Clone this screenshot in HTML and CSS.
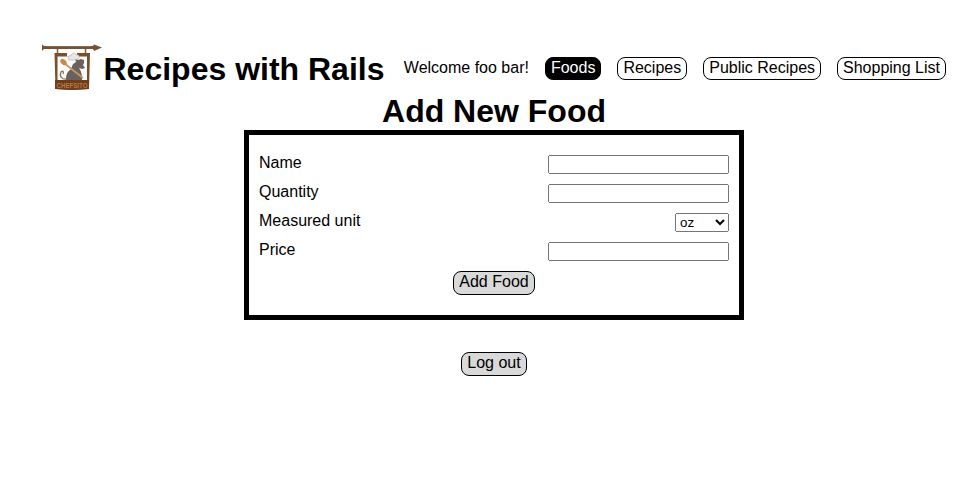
FILE: index.html
```html
<!DOCTYPE html>
<html lang="en">
<head>
<meta charset="utf-8">
<title>Recipes with Rails</title>
<link rel="stylesheet" href="styles.css">
</head>
<body>
<div class="page">
  <header class="header">
    <svg class="logo" viewBox="0 0 60 50" role="img" aria-label="Chefsito">
      <path d="M0 1.500l2 1.500h49l1-1.500L60 4.500l-8 3.500-1-2H2L0 8z" fill="#765031"/>
      <path d="M4 3.500h45" stroke="#967150" stroke-width=".8"/>
      <path d="M15.500 6v5M43.500 6v5" stroke="#806044" stroke-width="1.500"/>
      <path d="M12.500 10H25v3.500h10V10h13l-1 36-17 1-16.500-1z" fill="#79502e"/>
      <path d="M15.500 13.500H45V37H15.500z" fill="#fcfbf9"/>
      <path d="M24 37c0-5 1-8 5-11l2-5 3-2-1-3 3 1 3-1 3 1v3l-1 2 2 3-3 1-3-1c3 4 3 8 3 12z" fill="#6b625d"/>
      <path d="M25 36c-5 1-8-3-6-7 2-2 3 0 2 2" fill="none" stroke="#82736b" stroke-width="1.300"/>
      <path d="M27 17c-2-3 0-5 2-4 0-3 4-4 5-1 3-1 4 2 2 4l-5 1z" fill="#e9e7e5" stroke="#b6b2af" stroke-width=".7"/>
      <path d="M22 20l19 15" stroke="#c59568" stroke-width="1.700"/>
      <ellipse cx="21.500" cy="19" rx="2.500" ry="3.700" transform="rotate(-45 21.500 19)" fill="#c58a52"/>
      <path d="M13 37h34v9l-17 1-17-1z" fill="#6d3d1c"/>
      <text x="14.500" y="45" class="logo-text" textLength="31" lengthAdjust="spacingAndGlyphs">CHEFSITO</text>
    </svg>
    <h1 class="heading">Recipes with Rails</h1>
    <nav class="nav">
      <span>Welcome foo bar!</span>
      <a class="pill active">Foods</a>
      <a class="pill">Recipes</a>
      <a class="pill">Public Recipes</a>
      <a class="pill">Shopping List</a>
    </nav>
  </header>
  <main class="main">
    <h1 class="heading">Add New Food</h1>
    <form class="form">
      <div class="row"><label for="name">Name</label><input id="name" class="field" type="text"></div>
      <div class="row"><label for="quantity">Quantity</label><input id="quantity" class="field" type="text"></div>
      <div class="row"><label for="unit">Measured unit</label><select id="unit" class="unit"><option>oz</option></select></div>
      <div class="row"><label for="price">Price</label><input id="price" class="field" type="text"></div>
      <button class="pill button" type="button">Add Food</button>
    </form>
    <button class="pill button" type="button">Log out</button>
  </main>
</div>
</body>
</html>
```
FILE: styles.css
```css
* { box-sizing: border-box; margin: 0; padding: 0; }
body { font: 16px "Liberation Sans", Arial, sans-serif; color: #000; background: #fff; }
.page { width: 904px; margin: 43px 0 0 42px; }
.header { display: flex; align-items: center; height: 50px; }
.logo { width: 60px; height: 50px; flex: none; }
.logo-text { font: bold 7px "Liberation Sans", sans-serif; fill: #b87943; }
.heading { font-size: 32px; font-weight: bold; line-height: 37px; white-space: nowrap; }
.header .heading { padding: 2px 0 0 1.5px; }
.nav { display: flex; align-items: flex-start; gap: 16px; height: 22px; margin-left: auto; white-space: nowrap; }
.pill { border: 1px solid #000; border-radius: 8px; padding: 0 5px 3px; line-height: 18px; }
.nav span { line-height: 18px; padding-top: 2px; }
.active { background: #000; color: #fff; }
.main { display: flex; flex-direction: column; align-items: center; }
.form { width: 500px; height: 190px; border: 5px solid #000; padding: 20px 10px; margin-bottom: 32px; display: flex; flex-direction: column; align-items: center; gap: 10px; }
.row { width: 100%; height: 19px; display: flex; justify-content: space-between; }
.row label { line-height: 18px; margin-top: -1px; }
.nav .pill { height: 23px; padding: 1px 5px 2px; }
.field { width: 181px; height: 19px; padding: 1px 2px; }
.unit { width: 54px; height: 19px; font: 13.333px "Liberation Sans", Arial, sans-serif; }
.button { height: 24px; font: inherit; line-height: 19px; background: #d9d9d9; color: #000; }
```
